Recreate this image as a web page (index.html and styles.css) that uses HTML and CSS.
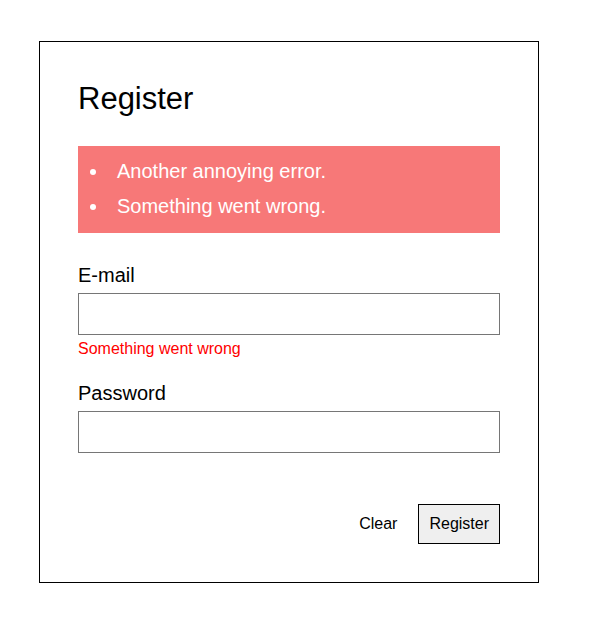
FILE: index.html
```html
<!DOCTYPE html>
<html lang="en">
<head>
<meta charset="utf-8">
<title>Register</title>
<link rel="stylesheet" href="styles.css">
</head>
<body>
<div class="page">
  <form class="card">
    <h1 class="title">Register</h1>
    <ul class="errors">
      <li>Another annoying error.</li>
      <li>Something went wrong.</li>
    </ul>
    <div class="field">
      <label class="label" for="email">E-mail</label>
      <input class="input" id="email" type="text">
      <div class="field-error">Something went wrong</div>
    </div>
    <div class="field field-pw">
      <label class="label" for="password">Password</label>
      <input class="input" id="password" type="password">
    </div>
    <div class="actions">
      <button type="button" class="btn btn-plain">Clear</button>
      <button type="button" class="btn btn-primary">Register</button>
    </div>
  </form>
</div>
</body>
</html>
```
FILE: styles.css
```css
* { box-sizing: border-box; }
html, body { margin: 0; padding: 0; background: #fff; }
body { font-family: "Liberation Sans", Arial, sans-serif; color: #000; }
.page { padding: 41px 0 0 39px; }
.card {
  width: 500px;
  border: 1px solid #000;
  padding: 38px 38px 38px 38px;
  display: flex;
  flex-direction: column;
}
.title {
  margin: 0;
  font-size: 31px;
  font-weight: normal;
  line-height: 38px;
}
.errors {
  margin: 28px 0 0 0;
  padding: 8px 0 9px 31px;
  background: #f77878;
  color: #fff;
  font-size: 20px;
  line-height: 35px;
  list-style: disc outside;
}
.errors li { padding-left: 8px; }
.field { display: flex; flex-direction: column; margin-top: 30px; }
.field-pw { margin-top: 23px; }
.label { font-size: 20px; line-height: 24px; margin-bottom: 6px; }
.input {
  height: 42px;
  border: 1px solid #767676;
  border-radius: 0;
  padding: 0 8px;
  font: 16px "Liberation Sans", Arial, sans-serif;
  margin: 0;
}
.field-error { color: #ff0000; font-size: 16px; line-height: 18px; margin-top: 5px; }
.actions {
  margin-top: 51px;
  display: flex;
  justify-content: flex-end;
  gap: 10px;
}
.btn {
  height: 40px;
  padding: 0 10px;
  font: 16px "Liberation Sans", Arial, sans-serif;
  color: #000;
  border-radius: 0;
  margin: 0;
}
.btn-plain { background: transparent; border: 1px solid transparent; }
.btn-primary { background: #efefef; border: 1px solid #000; }
```
